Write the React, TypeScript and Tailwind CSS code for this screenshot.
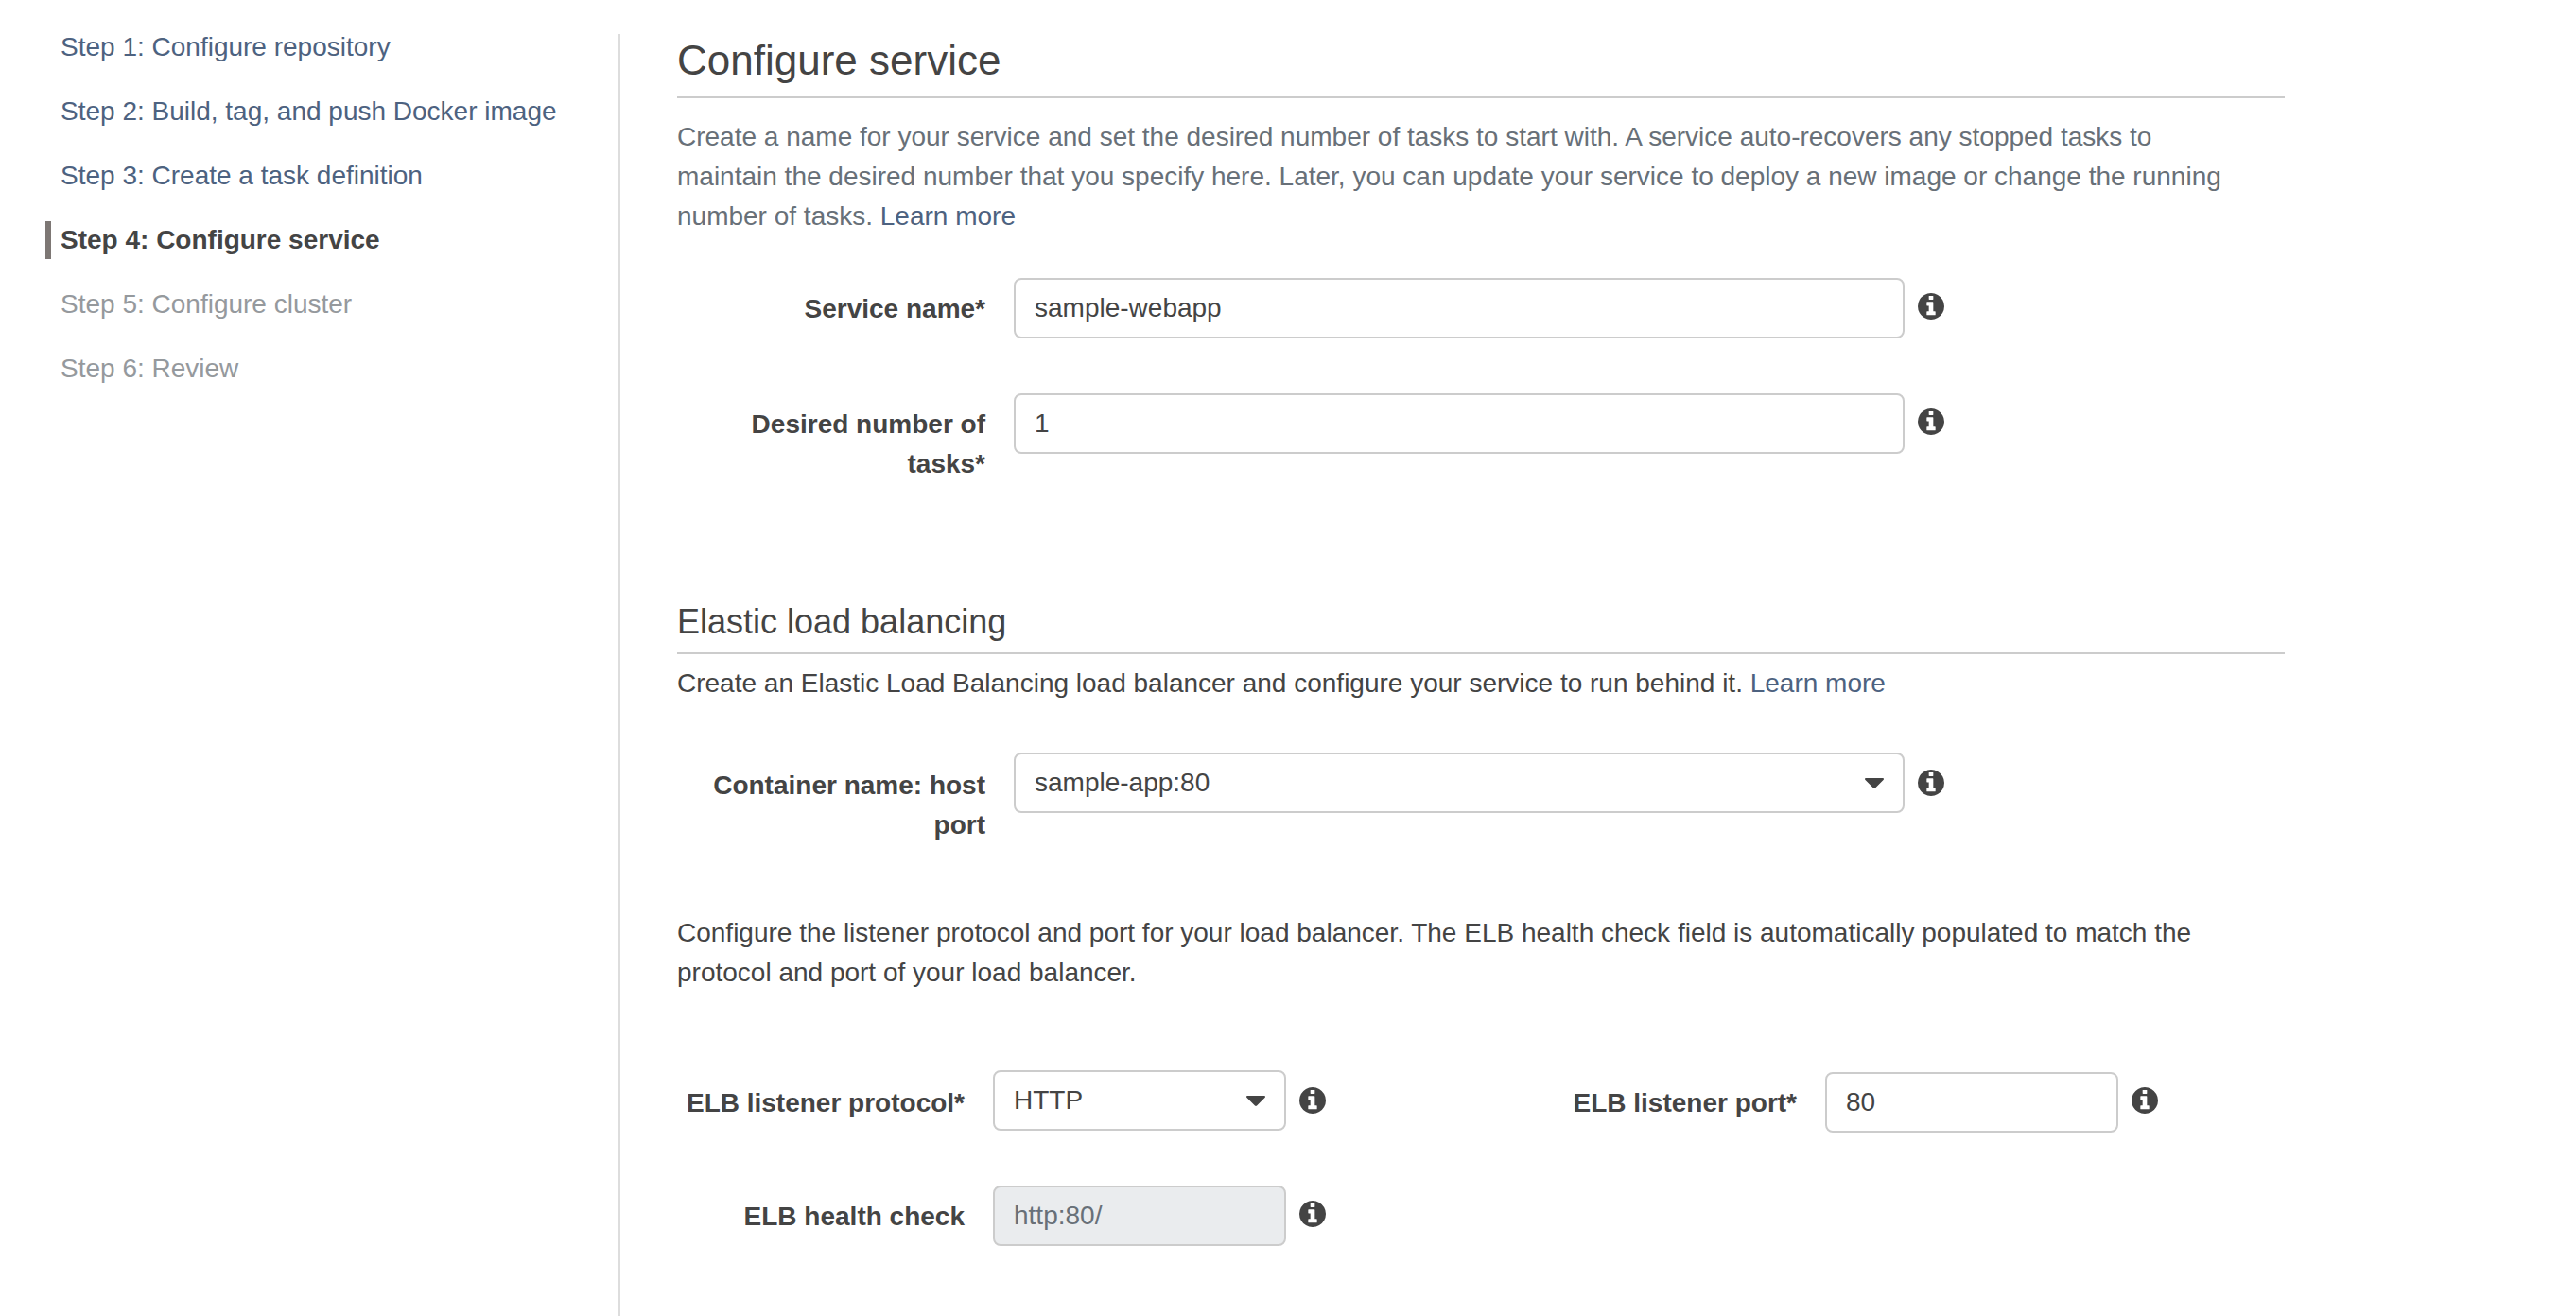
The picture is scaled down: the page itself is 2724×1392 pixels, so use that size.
import type { ReactNode } from "react";

const steps = [
  { label: "Step 1: Configure repository", state: "done" },
  { label: "Step 2: Build, tag, and push Docker image", state: "done" },
  { label: "Step 3: Create a task definition", state: "done" },
  { label: "Step 4: Configure service", state: "current" },
  { label: "Step 5: Configure cluster", state: "pending" },
  { label: "Step 6: Review", state: "pending" },
];

function StepItem({ label, state }: { label: string; state: string }) {
  if (state === "current") {
    return (
      <li aria-current="step" className="border-l-6 border-[#7d7774] pl-2.5 font-bold text-[#444444]">
        {label}
      </li>
    );
  }
  if (state === "pending") {
    return <li className="border-l-6 border-transparent pl-2.5 text-[#95999d]">{label}</li>;
  }
  return (
    <li className="border-l-6 border-transparent pl-2.5">
      <a href="#" className="text-[#4d6280]">
        {label}
      </a>
    </li>
  );
}

function InfoButton({ topic }: { topic: string }) {
  return (
    <div className="pt-4 pl-3.5">
      <button type="button" aria-label={`About ${topic}`} className="block size-7">
        <svg viewBox="128 128 1536 1536" className="size-7 fill-[#444444]" aria-hidden="true">
          <path d="M1152 1376v-160q0-14-9-23t-23-9h-96v-512q0-14-9-23t-23-9h-320q-14 0-23 9t-9 23v160q0 14 9 23t23 9h96v320h-96q-14 0-23 9t-9 23v160q0 14 9 23t23 9h448q14 0 23-9t9-23zm-128-896v-160q0-14-9-23t-23-9h-192q-14 0-23 9t-9 23v160q0 14 9 23t23 9h192q14 0 23-9t9-23zm640 416q0 209-103 385.5t-279.5 279.5-385.5 103-385.5-103-279.5-279.5-103-385.5 103-385.5 279.5-279.5 385.5-103 385.5 103 279.5 279.5 103 385.5z" />
        </svg>
      </button>
    </div>
  );
}

function FieldLabel({ id, children }: { id: string; children: ReactNode }) {
  return (
    <label htmlFor={id} className="pt-3 pr-7.5 text-right font-bold">
      {children}
    </label>
  );
}

function TextField({ id, value, disabled }: { id: string; value: string; disabled?: boolean }) {
  return (
    <input
      id={id}
      type="text"
      defaultValue={value}
      disabled={disabled}
      className="h-16 w-full min-w-0 rounded-lg border-2 border-[#cccccc] bg-white px-5 disabled:bg-[#eaecee] disabled:text-[#687078]"
    />
  );
}

function SelectField({ id, options }: { id: string; options: string[] }) {
  return (
    <div className="relative -mt-0.5 h-16">
      <select
        id={id}
        className="h-16 w-full appearance-none rounded-lg border-2 border-[#cccccc] bg-white px-5"
      >
        {options.map((option) => (
          <option key={option}>{option}</option>
        ))}
      </select>
      <svg
        viewBox="0 0 20 11"
        className="pointer-events-none absolute top-[27px] right-[22px] h-[11px] w-5 fill-[#444444]"
        aria-hidden="true"
      >
        <path d="M1 0h18q1 0 1 1q0 .6-.5 1L11 10.500q-1 .9-2 0L.5 2Q0 1.600 0 1q0-1 1-1z" />
      </svg>
    </div>
  );
}

function Row({ children }: { children: ReactNode }) {
  return <div className="grid grid-cols-[356fr_942fr_402fr] items-start">{children}</div>;
}

export default function App() {
  return (
    <div className="grid min-h-screen grid-cols-[654fr_1762fr_308fr] bg-white font-['Helvetica_Neue','Liberation_Sans',Arial,sans-serif] text-[28px] leading-[42px] text-[#444444]">
      <nav aria-label="Wizard steps" className="pt-7.5 pl-12">
        <ol className="flex flex-col gap-7 leading-10">
          {steps.map((step) => (
            <StepItem key={step.label} {...step} />
          ))}
        </ol>
      </nav>

      <main className="mt-9 border-l-2 border-[#dddddd] pb-10 pl-15">
        <h1 className="border-b-2 border-[#cccccc] pb-2.5 text-[44px] leading-14">Configure service</h1>
        <p className="mt-5 pr-10 text-[#687078]">
          Create a name for your service and set the desired number of tasks to start with. A service
          auto-recovers any stopped tasks to maintain the desired number that you specify here. Later,
          you can update your service to deploy a new image or change the running number of tasks.{" "}
          <a href="#" className="text-[#4d6280]">
            Learn more
          </a>
        </p>

        <div className="mt-11 flex flex-col gap-[58px]">
          <Row>
            <FieldLabel id="service-name">Service name*</FieldLabel>
            <TextField id="service-name" value="sample-webapp" />
            <InfoButton topic="service name" />
          </Row>
          <Row>
            <FieldLabel id="task-count">Desired number of tasks*</FieldLabel>
            <TextField id="task-count" value="1" />
            <InfoButton topic="desired number of tasks" />
          </Row>
        </div>

        <h2 className="mt-[122px] border-b-2 border-[#cccccc] pb-2 text-[36px] leading-12">
          Elastic load balancing
        </h2>
        <p className="mt-2.5 pr-10">
          Create an Elastic Load Balancing load balancer and configure your service to run behind it.{" "}
          <a href="#" className="text-[#4d6280]">
            Learn more
          </a>
        </p>

        <div className="mt-[54px]">
          <Row>
            <FieldLabel id="container">Container name: host port</FieldLabel>
            <SelectField id="container" options={["sample-app:80"]} />
            <InfoButton topic="container name and host port" />
          </Row>
        </div>

        <p className="mt-18 pr-10">
          Configure the listener protocol and port for your load balancer. The ELB health check field is
          automatically populated to match the protocol and port of your load balancer.
        </p>

        <div className="mt-21 grid grid-cols-[334fr_310fr_236fr_334fr_310fr_176fr] items-start gap-y-14">
          <FieldLabel id="protocol">ELB listener protocol*</FieldLabel>
          <SelectField id="protocol" options={["HTTP", "HTTPS"]} />
          <InfoButton topic="ELB listener protocol" />
          <FieldLabel id="port">ELB listener port*</FieldLabel>
          <TextField id="port" value="80" />
          <InfoButton topic="ELB listener port" />
          <FieldLabel id="health">ELB health check</FieldLabel>
          <TextField id="health" value="http:80/" disabled />
          <InfoButton topic="ELB health check" />
        </div>
      </main>
    </div>
  );
}
